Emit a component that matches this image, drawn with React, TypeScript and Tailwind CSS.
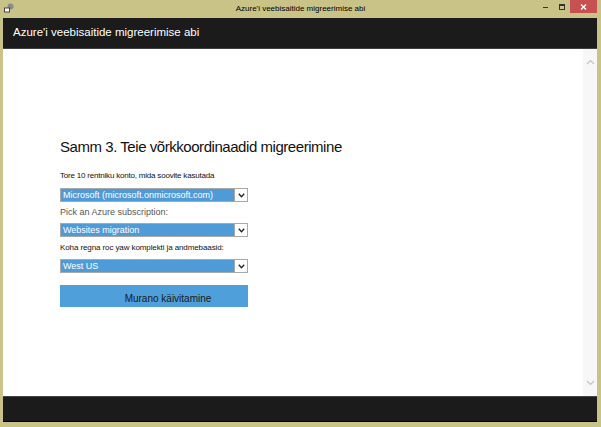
import React from "react";

const font = { fontFamily: '"Liberation Sans", Arial, sans-serif' };

function Chevron({ up }: { up?: boolean }) {
  return (
    <svg width="9" height="6" viewBox="0 0 9 6" className="block">
      <path
        d={up ? "M1 5 L4.5 1.5 L8 5" : "M1 1 L4.5 4.5 L8 1"}
        fill="none"
        stroke="#c4c4c4"
        strokeWidth="1.2"
      />
    </svg>
  );
}

function Select({ value }: { value: string }) {
  return (
    <div className="mt-[7px] flex h-[14px] w-[188px] border border-[#a8a8a8] bg-[#4f9bd7]">
      <div className="flex-1 truncate pl-[2px] text-[9px] leading-[12px] text-white">{value}</div>
      <div className="flex w-[13px] items-center justify-center border-l border-[#a8a8a8] bg-white">
        <svg width="7" height="5" viewBox="0 0 7 5">
          <path d="M0.8 0.8 L3.5 3.8 L6.2 0.8" fill="none" stroke="#222" strokeWidth="1.3" />
        </svg>
      </div>
    </div>
  );
}

export default function App() {
  return (
    <div className="flex h-[427px] w-[601px] flex-col bg-[#cac387]" style={font}>
      {/* title bar */}
      <div className="relative flex h-[18px] shrink-0 items-center">
        <svg width="10" height="10" viewBox="0 0 10 10" className="absolute left-[4px] top-[3px]">
          <circle cx="6.5" cy="3.5" r="3" fill="#8a8a8a" />
          <rect x="0.5" y="5" width="5" height="4" fill="#fff" stroke="#444" strokeWidth="1" />
        </svg>
        <div className="flex-1 text-center text-[8px] leading-[10px] text-black">
          Azure'i veebisaitide migreerimise abi
        </div>
        <div className="absolute right-[4px] top-0 flex h-[13px] items-start">
          <div className="mt-[7px] mr-[11px] h-[1px] w-[5px] bg-[#333]" />
          <div className="mt-[4px] mr-[5px] h-[6px] w-[6px] border border-[#333] border-t-2" />
          <div className="flex h-[13px] w-[27px] items-center justify-center bg-[#c75050]">
            <svg width="7" height="6" viewBox="0 0 7 6">
              <path d="M1 0.5 L6 5.5 M6 0.5 L1 5.5" stroke="#fff" strokeWidth="1.4" />
            </svg>
          </div>
        </div>
      </div>

      {/* window body */}
      <div className="ml-[3px] mr-[4px] flex flex-1 flex-col">
        <div className="flex h-[31px] shrink-0 items-center border-b border-[#3f3f3f] bg-[#1b1b1b] pl-[10px] text-[11.5px] text-white">
          Azure'i veebisaitide migreerimise abi
        </div>

        <div className="flex flex-1 bg-white">
          <div className="flex flex-1 flex-col pl-[57px] pt-[89px]">
            <h1 className="text-[15px] leading-[18px] tracking-[-0.45px] text-[#111]">
              Samm 3. Teie võrkkoordinaadid migreerimine
            </h1>
            <div className="mt-[15px] text-[8px] leading-[10px] tracking-[-0.2px] text-[#111]">
              Tore 10 rentniku konto, mida soovite kasutada
            </div>
            <Select value="Microsoft (microsoft.onmicrosoft.com)" />
            <div className="mt-[4px] text-[9px] leading-[12px] text-[#555]">Pick an Azure subscription:</div>
            <div className="-mt-[2px]">
              <Select value="Websites migration" />
            </div>
            <div className="mt-[6px] text-[8px] leading-[10px] tracking-[-0.1px] text-[#111]">
              Koha regna roc yaw komplekti ja andmebaasid:
            </div>
            <div className="-mt-[1px]">
              <Select value="West US" />
            </div>
            <button className="mt-[12px] flex h-[22px] w-[188px] items-end justify-center bg-[#4f9fdb] pb-[2px] pl-[28px] text-[10px] leading-[12px] text-[#1a1a1a]">
              Murano käivitamine
            </button>
          </div>
          <div className="flex w-[14px] flex-col items-center justify-between bg-[#f7f7f7] pb-[10px] pt-[10px]">
            <Chevron up />
            <Chevron />
          </div>
        </div>

        <div className="h-[26px] shrink-0 border-t border-[#444] border-b border-b-black bg-[#1b1b1b]" />
      </div>
      <div className="h-[5px] shrink-0" />
    </div>
  );
}
